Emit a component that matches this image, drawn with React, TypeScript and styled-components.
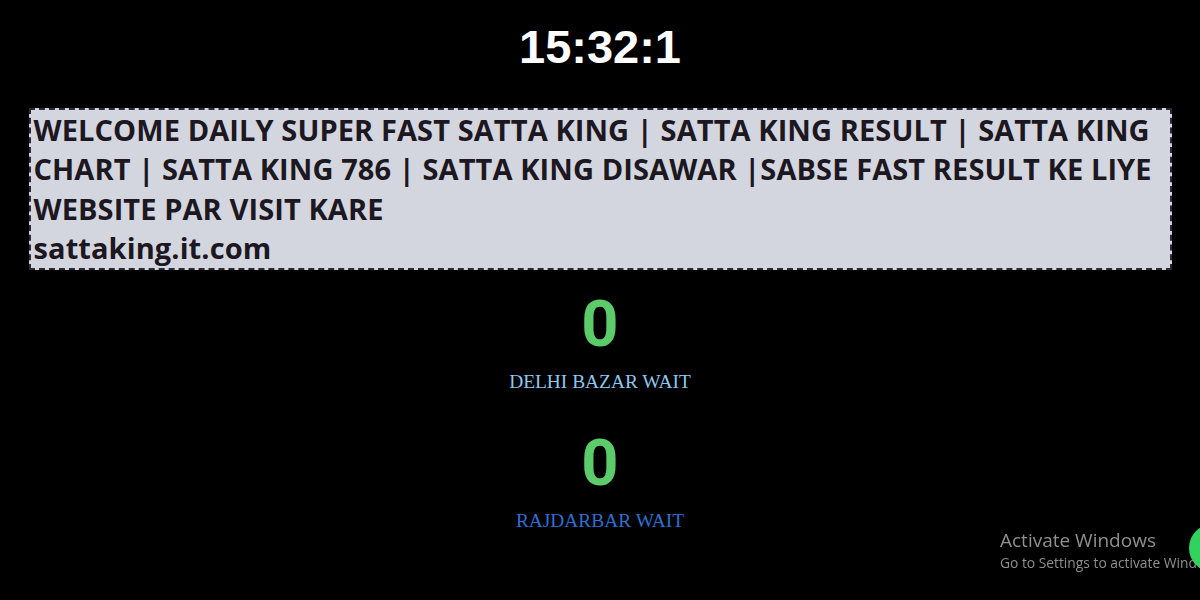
import styled, { createGlobalStyle } from "styled-components";

const GlobalStyle = createGlobalStyle`
	html, body {
		margin: 0;
		padding: 0;
		background: #000;
		height: 100%;
		overflow: hidden;
	}
`;

const Page = styled.div`
	display: flex;
	flex-direction: column;
	align-items: center;
	padding-top: 20px;
`;

const Clock = styled.div`
	font-family: "Liberation Sans", Arial, sans-serif;
	font-weight: bold;
	font-size: 47px;
	line-height: 54px;
	color: #fff;
`;

const Notice = styled.div`
	box-sizing: border-box;
	width: 1143px;
	margin-top: 34px;
	padding: 0 3px 1px;
	background: #d3d6de;
	border: 2px dashed #2a2a33;
	font-family: "Open Sans", Lato, sans-serif;
	font-weight: 700;
	font-size: 29px;
	letter-spacing: 0.1px;
	line-height: 39.3px;
	color: #1c1720;
	white-space: nowrap;
`;

const Result = styled.div`
	display: flex;
	flex-direction: column;
	align-items: center;
	margin-top: ${(props: { $top: number }) => props.$top}px;
`;

const Number = styled.div`
	font-family: Roboto, "Noto Sans", sans-serif;
	font-weight: 700;
	font-size: 65px;
	line-height: 70px;
	color: #5ccc6a;
`;

const Label = styled.div`
	font-family: "Liberation Serif", serif;
	font-size: 19.4px;
	line-height: 22px;
	margin-top: 12px;
	color: ${(props: { $color: string }) => props.$color};
`;

const Watermark = styled.div`
	position: fixed;
	left: 1000px;
	top: 528px;
	font-family: "Open Sans", "Noto Sans", sans-serif;
	color: #8f8f8f;
	white-space: nowrap;
`;

const WatermarkTitle = styled.div`
	font-size: 19px;
	line-height: 25px;
`;

const WatermarkSub = styled.div`
	font-size: 13.8px;
	line-height: 20px;
`;

const ChatBubble = styled.div`
	position: fixed;
	left: 1189px;
	top: 524px;
	width: 48px;
	height: 48px;
	border-radius: 50%;
	background: #2fd35e;
`;

export default function App() {
	return (
		<>
			<GlobalStyle />
			<Page>
				<Clock>15:32:1</Clock>
				<Notice>
					WELCOME DAILY SUPER FAST SATTA KING | SATTA KING RESULT | SATTA KING
					<br />
					CHART | SATTA KING 786 | SATTA KING DISAWAR |SABSE FAST RESULT KE LIYE
					<br />
					WEBSITE PAR VISIT KARE
					<br />
					sattaking.it.com
				</Notice>
				<Result $top={19}>
					<Number>0</Number>
					<Label $color="#8ec6ee">DELHI BAZAR WAIT</Label>
				</Result>
				<Result $top={35}>
					<Number>0</Number>
					<Label $color="#2f6fd3">RAJDARBAR WAIT</Label>
				</Result>
			</Page>
			<Watermark>
				<WatermarkTitle>Activate Windows</WatermarkTitle>
				<WatermarkSub>Go to Settings to activate Windows.</WatermarkSub>
			</Watermark>
			<ChatBubble />
		</>
	);
}
